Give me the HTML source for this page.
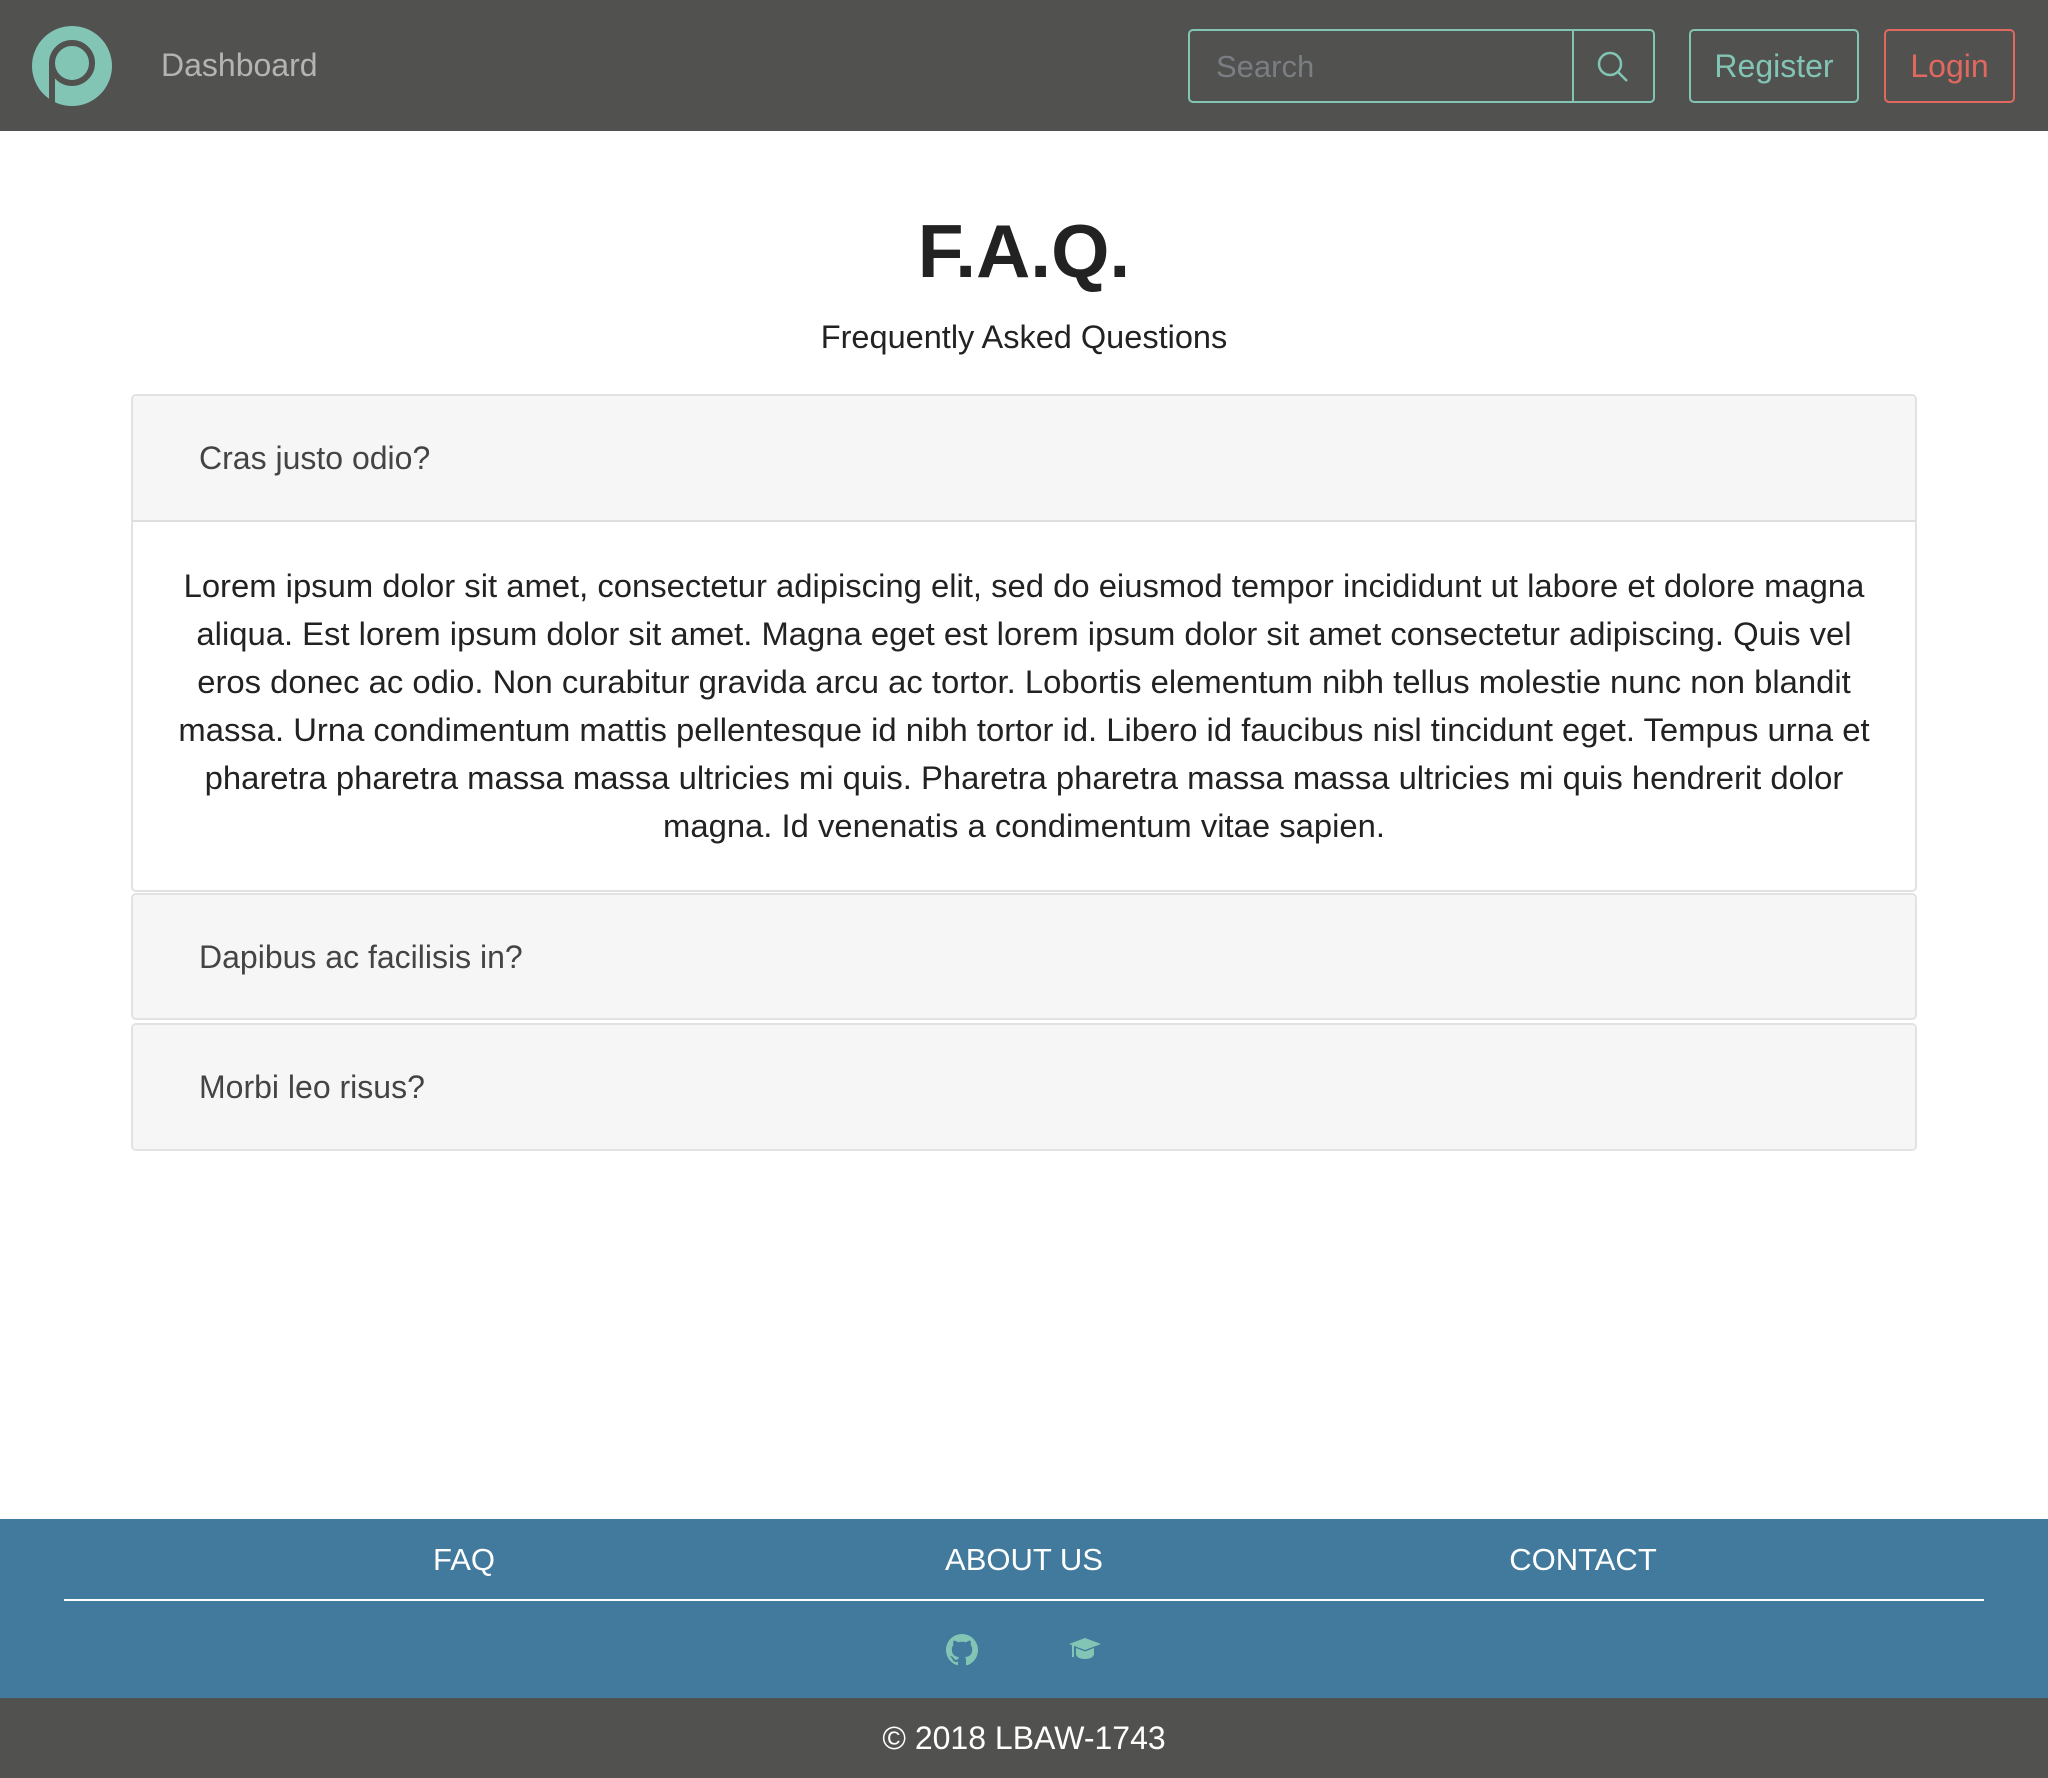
<!DOCTYPE html>
<html><head><meta charset="utf-8"><style>
*{box-sizing:border-box;margin:0;padding:0}
body{width:2048px;height:1778px;position:relative;font-family:"Liberation Sans",Arial,sans-serif;background:#fff;overflow:hidden}
.nav{position:absolute;left:0;top:0;width:2048px;height:131px;background:#515150}
.abs{position:absolute}
.dash{left:161px;top:47px;font-size:32px;color:#b4b4b4}
.search{left:1188px;top:29px;width:467px;height:74px;border:2px solid #83c5b5;border-radius:5px}
.search .ph{position:absolute;left:26px;top:18px;font-size:31px;color:#7a7e83}
.search .div{position:absolute;left:382px;top:0;width:2px;height:70px;background:#83c5b5}
.btn{top:29px;height:74px;border:2px solid;border-radius:5px;font-size:32px;text-align:center;line-height:70px}
h1{position:absolute;left:0;width:2048px;top:214px;text-align:center;font-size:75px;font-weight:bold;color:#222;line-height:1}
.sub{left:0;width:2048px;top:319px;text-align:center;font-size:32.5px;color:#222}
.card{position:absolute;left:131px;width:1786px;border:2px solid #e2e2e2;border-radius:5px;overflow:hidden}
.hd{background:#f6f6f6;height:124px;font-size:32px;color:#444;padding-left:66px;line-height:124px}
.bd{border-top:2px solid #dedede;padding:40px 0 0;text-align:center;font-size:32.8px;line-height:48px;color:#222;height:371px;white-space:nowrap}
.foot{left:0;top:1519px;width:2048px;height:180px;background:#417a9c}
.fl{top:1542px;font-size:31px;color:#fff;transform:translateX(-50%)}
.bot{left:0;top:1698px;width:2048px;height:80px;background:#515150;color:#fff;font-size:32px;text-align:center;line-height:80px}
</style></head><body>
<div class="nav">
<svg class="abs" style="left:32px;top:26px" width="80" height="80" viewBox="0 0 80 80">
<circle cx="40" cy="40" r="40" fill="#83c5b5"/>
<circle cx="40" cy="37" r="20" fill="none" stroke="#515150" stroke-width="6"/>
<line x1="20" y1="37" x2="20" y2="79" stroke="#515150" stroke-width="6"/>
</svg>
<div class="abs dash">Dashboard</div>
<div class="abs search"><span class="ph">Search</span><div class="div"></div>
<svg class="abs" style="left:406px;top:19px" width="34" height="34" viewBox="0 0 34 34"><circle cx="14" cy="14" r="11" fill="none" stroke="#83c5b5" stroke-width="2.5"/><line x1="22" y1="22" x2="31" y2="31" stroke="#83c5b5" stroke-width="2.5"/></svg></div>
<div class="abs btn" style="left:1689px;width:170px;color:#83c5b5;border-color:#83c5b5">Register</div>
<div class="abs btn" style="left:1884px;width:131px;color:#e0685e;border-color:#e0685e">Login</div>
</div>
<h1>F.A.Q.</h1>
<div class="abs sub">Frequently Asked Questions</div>
<div class="card" style="top:394px;height:498px">
<div class="hd">Cras justo odio?</div>
<div class="bd">Lorem ipsum dolor sit amet, consectetur adipiscing elit, sed do eiusmod tempor incididunt ut labore et dolore magna<br>aliqua. Est lorem ipsum dolor sit amet. Magna eget est lorem ipsum dolor sit amet consectetur adipiscing. Quis vel<br>eros donec ac odio. Non curabitur gravida arcu ac tortor. Lobortis elementum nibh tellus molestie nunc non blandit<br>massa. Urna condimentum mattis pellentesque id nibh tortor id. Libero id faucibus nisl tincidunt eget. Tempus urna et<br>pharetra pharetra massa massa ultricies mi quis. Pharetra pharetra massa massa ultricies mi quis hendrerit dolor<br>magna. Id venenatis a condimentum vitae sapien.</div>
</div>
<div class="card" style="top:893px;height:127px"><div class="hd">Dapibus ac facilisis in?</div></div>
<div class="card" style="top:1023px;height:128px"><div class="hd">Morbi leo risus?</div></div>
<div class="abs foot"></div>
<div class="abs fl" style="left:464px">FAQ</div>
<div class="abs fl" style="left:1024px">ABOUT US</div>
<div class="abs fl" style="left:1583px">CONTACT</div>
<div class="abs" style="left:64px;top:1599px;width:1920px;height:2px;background:#fff"></div>
<svg class="abs" style="left:946px;top:1634px" width="32" height="32" viewBox="0 0 16 16"><path fill="#83c5b5" d="M8 0C3.58 0 0 3.58 0 8c0 3.54 2.29 6.53 5.47 7.59.4.07.55-.17.55-.38v-1.33c-2.23.48-2.7-1.07-2.7-1.07-.36-.92-.89-1.17-.89-1.17-.73-.5.06-.49.06-.49.8.06 1.23.83 1.23.83.71 1.22 1.87.87 2.33.66.07-.52.28-.87.51-1.07-1.78-.2-3.64-.89-3.64-3.95 0-.87.31-1.59.82-2.15-.08-.2-.36-1.02.08-2.12 0 0 .67-.21 2.2.82.64-.18 1.32-.27 2-.27.68 0 1.36.09 2 .27 1.53-1.04 2.2-.82 2.2-.82.44 1.1.16 1.92.08 2.12.51.56.82 1.27.82 2.15 0 3.07-1.87 3.75-3.65 3.95.29.25.54.73.54 1.48v2.2c0 .21.15.46.55.38A8.01 8.01 0 0016 8c0-4.42-3.58-8-8-8z"/></svg>
<svg class="abs" style="left:1069px;top:1637px" width="32" height="26" viewBox="0 0 32 26"><path fill="#83c5b5" d="M16 1L0 7l16 6 16-6z M7 11v6c0 3 4 5 9 5s9-2 9-5v-6l-9 3.5z"/><rect x="3" y="8" width="2" height="12" fill="#83c5b5"/></svg>
<div class="abs bot">© 2018 LBAW-1743</div>
</body></html>
